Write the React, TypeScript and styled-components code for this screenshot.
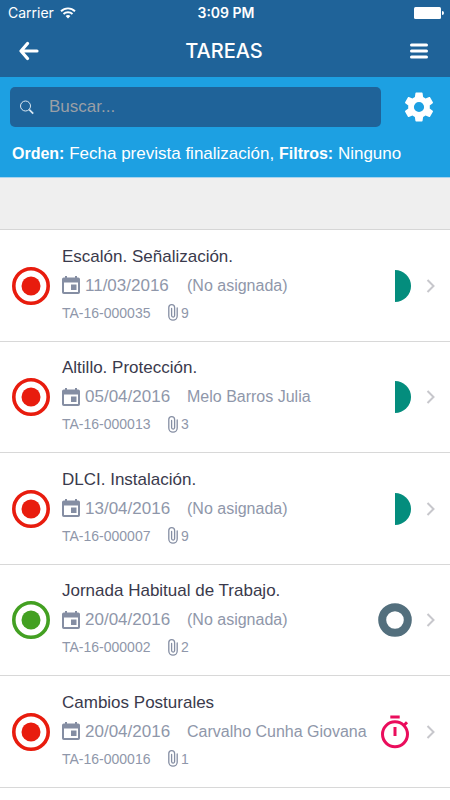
import React from 'react';
import styled, { createGlobalStyle } from 'styled-components';

const GlobalStyle = createGlobalStyle`
  *, *::before, *::after { box-sizing: border-box; }
  body {
    margin: 0;
    background: #ffffff;
    color: #3a3a4c;
    font-family: "Liberation Sans", Arial, sans-serif;
  }
  button, input { font: inherit; }
  svg { display: block; flex: none; }
`;

const Screen = styled.div`
  min-height: 100vh;
  overflow: hidden;
  background: #ffffff;
`;

const Header = styled.header`
  background: #1f6399;
  color: #ffffff;
`;

const StatusBar = styled.div`
  display: grid;
  grid-template-columns: 1fr auto 1fr;
  align-items: center;
  height: 25px;
  padding: 0 6px 0 8px;
  font-family: Inter, "Liberation Sans", sans-serif;
  font-size: 14px;
  line-height: 24px;
`;

const Carrier = styled.span`
  display: flex;
  align-items: center;
  gap: 6px;
`;

const Clock = styled.span`
  font-weight: 600;
`;

const BatterySlot = styled.span`
  justify-self: end;
`;

const NavBar = styled.div`
  display: grid;
  grid-template-columns: 36px 1fr 36px;
  align-items: center;
  height: 52px;
  padding: 0 13px 0 11px;
`;

const Title = styled.h1`
  margin: 0;
  font-family: Inter, "Liberation Sans", sans-serif;
  font-size: 20px;
  font-weight: 500;
  line-height: 24px;
  text-align: center;
`;

const IconButton = styled.button`
  display: flex;
  align-items: center;
  justify-content: center;
  height: 36px;
  padding: 0;
  border: 0;
  background: none;
  color: #ffffff;
  cursor: pointer;
`;

const FilterPanel = styled.section`
  padding: 10px 12px 0 10px;
  height: 101px;
  background: #1da0e2;
  border-bottom: 1px solid #a9d4ee;
  color: #ffffff;
`;

const SearchRow = styled.div`
  display: grid;
  grid-template-columns: 1fr 38px;
  gap: 19px;
  align-items: center;
`;

const SearchBox = styled.label`
  display: flex;
  align-items: center;
  gap: 15px;
  height: 40px;
  padding: 0 9px;
  border-radius: 5px;
  background: #1f6399;
`;

const SearchInput = styled.input`
  flex: 1;
  min-width: 0;
  padding: 0;
  border: 0;
  outline: 0;
  background: transparent;
  color: #ffffff;
  font-size: 17px;
  line-height: 24px;
  &::placeholder { color: #9a9fa6; opacity: 1; }
`;

const Summary = styled.p`
  margin: 15px 2px 0;
  font-size: 17px;
  line-height: 24px;
  white-space: nowrap;
`;

const SummaryLabel = styled.strong`
  font-size: 16px;
`;

const Spacer = styled.div`
  height: 52px;
  background: #efefef;
  border-bottom: 1px solid #d6d6d6;
`;

const TaskList = styled.ul`
  display: grid;
  grid-auto-rows: 112px 111px;
  margin: 0;
  padding: 0;
  list-style: none;
`;

const TaskItem = styled.li`
  border-bottom: 1px solid #d8d8d8;
`;

const TaskLink = styled.a`
  display: grid;
  grid-template-columns: 38px 1fr 34px 12px;
  column-gap: 12px;
  align-items: center;
  height: 100%;
  padding: 0 14px 0 12px;
  color: inherit;
  text-decoration: none;
`;

const TaskBody = styled.div`
  min-width: 0;
  padding-bottom: 4px;
  white-space: nowrap;
`;

const TaskTitle = styled.h2`
  margin: 0;
  font-size: 17px;
  font-weight: 300;
  line-height: 29px;
`;

const Meta = styled.div`
  display: flex;
  align-items: center;
  color: #8f97aa;
  font-size: 17px;
  line-height: 29px;
`;

const DateText = styled.time`
  flex: none;
  width: 107px;
  padding-left: 5px;
`;

const Assignee = styled.span`
  font-size: 16px;
`;

const Reference = styled.div`
  display: flex;
  align-items: center;
  color: #8f97aa;
  font-size: 14px;
  line-height: 26px;
`;

const Code = styled.span`
  width: 106px;
`;

const Count = styled.span`
  padding-left: 3px;
`;

const WifiIcon = () => (
  <svg width="16" height="12" viewBox="0 0 16 12" fill="none" stroke="#fff" strokeWidth="1.9">
    <path d="M1 4.3C5 .4 11 .4 15 4.3" />
    <path d="M3.5 7C6 4.7 10 4.7 12.500 7" />
    <path d="M5.600 8.900C7 7.700 9 7.700 10.400 8.900L8 11.400Z" fill="#fff" stroke="none" />
  </svg>
);

const BatteryIcon = () => (
  <svg width="30" height="12" viewBox="0 0 30 12" fill="#fff">
    <rect width="27" height="12" rx="1.500" />
    <path d="M28 4a2 2 0 0 1 0 4z" />
  </svg>
);

const BackIcon = () => (
  <svg width="20" height="20" viewBox="0 0 20 20" fill="none" stroke="#fff" strokeWidth="3.200" strokeLinecap="round" strokeLinejoin="round">
    <path d="M8.500 2.500L2 10l6.500 7.500M2.500 10h15.500" />
  </svg>
);

const MenuIcon = () => (
  <svg width="20" height="18" viewBox="0 0 20 18" stroke="#fff" strokeWidth="3" strokeLinecap="round">
    <path d="M2.500 3h15M2.500 9h15M2.500 15h15" />
  </svg>
);

const SearchIcon = () => (
  <svg width="15" height="15" viewBox="0 0 15 15" fill="none" stroke="#dbe9f3">
    <circle cx="6.500" cy="6" r="5" strokeWidth="1" />
    <path d="M10.200 9.700L14.200 13.700" strokeWidth="1.700" />
  </svg>
);

const GearIcon = () => (
  <svg width="36" height="36" viewBox="0 0 24 24" fill="#fff">
    <path d="M19.140 12.940c.04-.3.06-.61.06-.94 0-.32-.02-.64-.07-.94l2.030-1.580c.18-.14.23-.41.12-.61l-1.920-3.320c-.12-.22-.37-.29-.59-.22l-2.390.96c-.5-.38-1.030-.7-1.620-.94l-.36-2.540c-.04-.24-.24-.41-.48-.41h-3.840c-.24 0-.43.17-.47.41l-.36 2.540c-.59.24-1.130.57-1.620.94l-2.390-.96c-.22-.08-.47 0-.59.22L2.740 8.870c-.12.21-.08.47.12.61l2.030 1.580c-.05.3-.09.63-.09.94s.02.64.07.94l-2.030 1.580c-.18.14-.23.41-.12.61l1.920 3.320c.12.22.37.29.59.22l2.390-.96c.5.38 1.030.7 1.620.94l.36 2.540c.05.24.24.41.48.41h3.840c.24 0 .44-.17.47-.41l.36-2.540c.59-.24 1.130-.56 1.620-.94l2.390.96c.22.08.47 0 .59-.22l1.920-3.320c.12-.22.07-.47-.12-.61l-2.010-1.580zM12 15.400a3.400 3.400 0 1 1 0-6.800 3.400 3.400 0 0 1 0 6.800z" />
  </svg>
);

const TargetIcon = ({ color }: { color: string }) => (
  <svg width="38" height="38" viewBox="0 0 38 38">
    <circle cx="19" cy="19" r="17.200" fill="none" stroke={color} strokeWidth="3.600" />
    <circle cx="19" cy="19" r="9.500" fill={color} />
  </svg>
);

const CalendarIcon = () => (
  <svg width="18" height="18" viewBox="0 0 18 18" fill="#858ea3">
    <path fillRule="evenodd" d="M3 0h2v1.500h8V0h2v1.500h1.200a1.800 1.800 0 0 1 1.800 1.800v12.900a1.800 1.800 0 0 1-1.800 1.800H1.800A1.800 1.800 0 0 1 0 16.200V3.300a1.800 1.800 0 0 1 1.800-1.800H3zM2 6.600V16h14V6.600z" />
    <path d="M9 8.500h5.500V14H9z" />
  </svg>
);

const ClipIcon = () => (
  <svg width="10" height="17" viewBox="0 0 10 17" fill="none" stroke="#858ea3" strokeWidth="1.300" strokeLinecap="round">
    <path d="M9.200 4v8a4.200 4.200 0 0 1-8.400 0V3.600a2.900 2.900 0 0 1 5.800 0v8a1.500 1.500 0 0 1-3 0V4.500" />
  </svg>
);

const ChevronIcon = () => (
  <svg width="12" height="14" viewBox="0 0 12 14" fill="none" stroke="#c7c7cc" strokeWidth="2">
    <path d="M3.500 1l6 6-6 6" />
  </svg>
);

type Status = 'half' | 'ring' | 'timer';

const StatusIcon = ({ status }: { status: Status }) => (
  <svg width="34" height="34" viewBox="0 0 34 34">
    {status === 'half' && <path d="M17 1a16 16 0 0 1 0 32z" fill="#048d7d" />}
    {status === 'ring' && <circle cx="17" cy="17" r="12.800" fill="none" stroke="#536f7d" strokeWidth="8" />}
    {status === 'timer' && (
      <g fill="none" stroke="#ea0d5c" strokeWidth="3">
        <circle cx="17" cy="19.300" r="12.500" />
        <path d="M12.300 2h9.400M17 12v9M25.800 10.500l3.200-3.200" />
      </g>
    )}
  </svg>
);

interface Task {
  title: string;
  date: string;
  assignee: string;
  code: string;
  files: number;
  color: string;
  status: Status;
}

const RED = '#e81c0e';
const GREEN = '#43a022';

const tasks: Task[] = [
  { title: 'Escalón. Señalización.', date: '11/03/2016', assignee: '(No asignada)', code: 'TA-16-000035', files: 9, color: RED, status: 'half' },
  { title: 'Altillo. Protección.', date: '05/04/2016', assignee: 'Melo Barros Julia', code: 'TA-16-000013', files: 3, color: RED, status: 'half' },
  { title: 'DLCI. Instalación.', date: '13/04/2016', assignee: '(No asignada)', code: 'TA-16-000007', files: 9, color: RED, status: 'half' },
  { title: 'Jornada Habitual de Trabajo.', date: '20/04/2016', assignee: '(No asignada)', code: 'TA-16-000002', files: 2, color: GREEN, status: 'ring' },
  { title: 'Cambios Posturales', date: '20/04/2016', assignee: 'Carvalho Cunha Giovana', code: 'TA-16-000016', files: 1, color: RED, status: 'timer' },
];

export default function App() {
  return (
    <Screen>
      <GlobalStyle />
      <Header>
        <StatusBar>
          <Carrier>Carrier <WifiIcon /></Carrier>
          <Clock>3:09 PM</Clock>
          <BatterySlot><BatteryIcon /></BatterySlot>
        </StatusBar>
        <NavBar>
          <IconButton type="button" aria-label="Volver"><BackIcon /></IconButton>
          <Title>TAREAS</Title>
          <IconButton type="button" aria-label="Menú"><MenuIcon /></IconButton>
        </NavBar>
      </Header>
      <FilterPanel>
        <SearchRow>
          <SearchBox>
            <SearchIcon />
            <SearchInput type="text" placeholder="Buscar..." aria-label="Buscar" />
          </SearchBox>
          <IconButton type="button" aria-label="Ajustes"><GearIcon /></IconButton>
        </SearchRow>
        <Summary>
          <SummaryLabel>Orden:</SummaryLabel> Fecha prevista finalización,{' '}
          <SummaryLabel>Filtros:</SummaryLabel> Ninguno
        </Summary>
      </FilterPanel>
      <Spacer />
      <TaskList>
        {tasks.map((task) => (
          <TaskItem key={task.code}>
            <TaskLink href="#">
              <TargetIcon color={task.color} />
              <TaskBody>
                <TaskTitle>{task.title}</TaskTitle>
                <Meta>
                  <CalendarIcon />
                  <DateText>{task.date}</DateText>
                  <Assignee>{task.assignee}</Assignee>
                </Meta>
                <Reference>
                  <Code>{task.code}</Code>
                  <ClipIcon />
                  <Count>{task.files}</Count>
                </Reference>
              </TaskBody>
              <StatusIcon status={task.status} />
              <ChevronIcon />
            </TaskLink>
          </TaskItem>
        ))}
      </TaskList>
    </Screen>
  );
}
